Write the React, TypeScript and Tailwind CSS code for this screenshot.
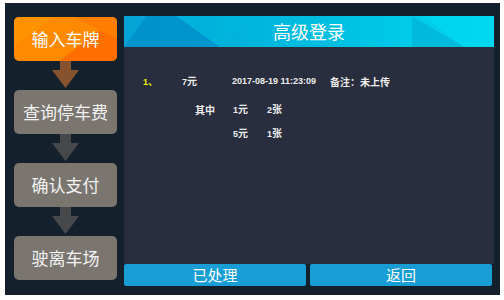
const steps = [
  { label: "输入车牌", active: true },
  { label: "查询停车费", active: false },
  { label: "确认支付", active: false },
  { label: "驶离车场", active: false },
];

function Arrow({ color }: { color: string }) {
  return (
    <svg width="103" height="29" viewBox="0 0 103 29" className="block">
      <polygon points="46,0 57,0 57,9 65,9 51.5,27 38,9 46,9" fill={color} />
    </svg>
  );
}

function StepButton({ label, active }: { label: string; active: boolean }) {
  if (active) {
    return (
      <div className="relative h-[44px] w-[103px] rounded-[5px] overflow-hidden bg-[#ff8a00]">
        <svg width="103" height="44" viewBox="0 0 103 44" className="absolute inset-0">
          <polygon points="45,44 103,0 103,44" fill="#ff6f00" />
          <polygon points="60,0 103,0 103,22" fill="#ff7d00" />
          <polygon points="0,0 40,0 0,30" fill="#ff9200" />
        </svg>
        <div className="relative flex h-full items-center justify-center text-[17px] text-white">
          {label}
        </div>
      </div>
    );
  }
  return (
    <div className="flex h-[44px] w-[103px] items-center justify-center rounded-[5px] bg-[#7a766f] text-[17px] text-[#f2f2f2]">
      {label}
    </div>
  );
}

export default function App() {
  return (
    <div
      className="w-[504px] h-[300px] bg-white pt-[3px] pl-[5px]"
      style={{ fontFamily: '"Noto Sans CJK SC", "Liberation Sans", sans-serif' }}
    >
      <div className="flex w-[495px] h-[292px] bg-[#15202d]">
        {/* steps */}
        <div className="flex flex-col pl-[9px] pt-[14px]">
          {steps.map((s, i) => (
            <div key={s.label}>
              <StepButton label={s.label} active={s.active} />
              {i < steps.length - 1 && <Arrow color={i === 0 ? "#87532e" : "#46484b"} />}
            </div>
          ))}
        </div>

        {/* panel */}
        <div className="ml-[7px] mt-[13px] flex w-[370px] flex-col">
          <div className="relative h-[31px] overflow-hidden bg-gradient-to-r from-[#05a3d5] via-[#00bde0] to-[#00d6f0]">
            <svg width="370" height="31" viewBox="0 0 370 31" className="absolute inset-0">
              <polygon points="0,31 22,0 52,0 96,31" fill="#008fc8" opacity="0.8" />
              <polygon points="52,0 130,0 96,31" fill="#00b5dc" opacity="0.6" />
              <polygon points="288,0 340,31 288,31" fill="#00b2d6" opacity="0.7" />
              <polygon points="300,0 370,0 370,31 340,31" fill="#00d8f2" opacity="0.6" />
            </svg>
            <div className="relative flex h-full items-center justify-center text-[18px] text-white">
              高级登录
            </div>
          </div>

          <div
            className="h-[217px] bg-[#282e3d] pt-[28px] text-[9px] font-bold text-[#ececec]"
            style={{ fontFamily: '"Liberation Sans", "Noto Sans CJK SC", sans-serif' }}
          >
            <div className="flex h-[14px] items-center pl-[19px]">
              <span className="w-[39px] text-[#f0f000]">1<span className="text-[10px]">、</span></span>
              <span className="w-[50px]">7<span className="text-[10px]">元</span></span>
              <span className="w-[98px]">2017-08-19 11:23:09</span>
              <span className="text-[10px]">备注：未上传</span>
            </div>
            <div className="mt-[14px] flex h-[14px] items-center pl-[71px]">
              <span className="w-[38px] text-[10px]">其中</span>
              <span className="w-[34px]">1<span className="text-[10px]">元</span></span>
              <span>2<span className="text-[10px]">张</span></span>
            </div>
            <div className="mt-[10px] flex h-[14px] items-center pl-[109px]">
              <span className="w-[34px]">5<span className="text-[10px]">元</span></span>
              <span>1<span className="text-[10px]">张</span></span>
            </div>
          </div>

          <div className="flex gap-[4px]">
            <button className="h-[22px] w-[182px] rounded-[2px] bg-[#189dd5] text-[15px] text-white">
              已处理
            </button>
            <button className="h-[22px] w-[182px] rounded-[2px] bg-[#189dd5] text-[15px] text-white">
              返回
            </button>
          </div>
        </div>
      </div>
    </div>
  );
}
